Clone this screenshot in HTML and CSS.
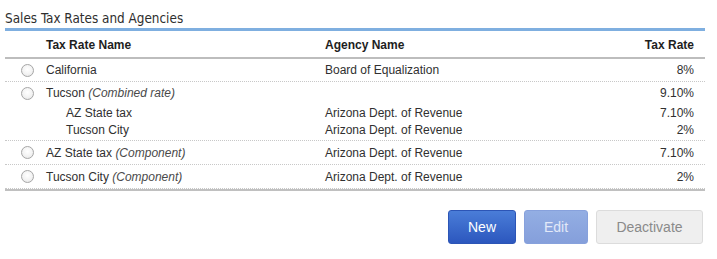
FILE: index.html
```html
<!DOCTYPE html>
<html>
<head>
<meta charset="utf-8">
<link rel="stylesheet" href="styles.css">
</head>
<body>
<div class="panel">
  <div class="title">Sales Tax Rates and Agencies</div>
  <div class="table">
    <div class="row head">
      <div class="c-sel"></div>
      <div class="c-name">Tax Rate Name</div>
      <div class="c-agency">Agency Name</div>
      <div class="c-rate">Tax Rate</div>
    </div>
    <div class="row item">
      <div class="c-sel"><span class="radio"></span></div>
      <div class="c-name">California</div>
      <div class="c-agency">Board of Equalization</div>
      <div class="c-rate">8%</div>
    </div>
    <div class="group">
      <div class="row main">
        <div class="c-sel"><span class="radio"></span></div>
        <div class="c-name">Tucson <em>(Combined rate)</em></div>
        <div class="c-agency"></div>
        <div class="c-rate">9.10%</div>
      </div>
      <div class="row sub">
        <div class="c-sel"></div>
        <div class="c-name">AZ State tax</div>
        <div class="c-agency">Arizona Dept. of Revenue</div>
        <div class="c-rate">7.10%</div>
      </div>
      <div class="row sub">
        <div class="c-sel"></div>
        <div class="c-name">Tucson City</div>
        <div class="c-agency">Arizona Dept. of Revenue</div>
        <div class="c-rate">2%</div>
      </div>
    </div>
    <div class="row item tall">
      <div class="c-sel"><span class="radio"></span></div>
      <div class="c-name">AZ State tax <em>(Component)</em></div>
      <div class="c-agency">Arizona Dept. of Revenue</div>
      <div class="c-rate">7.10%</div>
    </div>
    <div class="row item tall last">
      <div class="c-sel"><span class="radio"></span></div>
      <div class="c-name">Tucson City <em>(Component)</em></div>
      <div class="c-agency">Arizona Dept. of Revenue</div>
      <div class="c-rate">2%</div>
    </div>
  </div>
  <div class="actions">
    <button class="btn primary">New</button>
    <button class="btn disabled-primary">Edit</button>
    <button class="btn disabled">Deactivate</button>
  </div>
</div>
</body>
</html>
```

FILE: styles.css
```css
html, body {
  margin: 0;
  padding: 0;
  background: #ffffff;
}
.panel {
  width: 700px;
  margin-left: 5px;
  font-family: "Liberation Sans", Arial, sans-serif;
  font-size: 12px;
  color: #303030;
}
.title {
  padding-top: 10px;
  height: 18px;
  line-height: 18px;
  font-family: "DejaVu Sans Condensed", "DejaVu Sans", sans-serif;
  font-stretch: condensed;
  font-size: 13.4px;
  color: #2e2e2e;
  border-bottom: 3px solid #7fafe0;
  margin-bottom: 1px;
}
.row {
  display: grid;
  grid-template-columns: 41px 279px 1fr 100px;
  align-items: center;
}
.head {
  height: 25px;
  font-weight: bold;
  color: #1e1e1e;
  border-bottom: 2px solid #bdbdbd;
}
.item {
  height: 22px;
  border-bottom: 1px dotted #c8c8c8;
}
.item.tall {
  height: 23px;
}
.item.last {
  border-bottom: 1px dotted #c8c8c8;
  box-shadow: 0 2px 0 #c0c0c0;
  margin-bottom: 2px;
}
.group {
  padding-bottom: 2px;
  border-bottom: 1px dotted #c8c8c8;
}
.main {
  height: 22px;
}
.sub {
  height: 17px;
}
.sub .c-name {
  padding-left: 20px;
}
.c-sel {
  display: flex;
  justify-content: center;
  align-items: center;
  padding-left: 3px;
}
.c-rate {
  text-align: right;
  padding-right: 11px;
}
em {
  color: #4a4a4a;
}
.radio {
  display: block;
  width: 11px;
  height: 11px;
  border: 1px solid #a6a6a6;
  border-radius: 50%;
  background: radial-gradient(circle at 50% 40%, #ffffff 0%, #f4f4f4 50%, #e2e2e2 100%);
}
.actions {
  display: flex;
  justify-content: flex-end;
  gap: 8px;
  margin-top: 21px;
  padding-right: 2px;
}
.btn {
  height: 34px;
  border-radius: 3px;
  font-family: "Liberation Sans", Arial, sans-serif;
  font-size: 14px;
  padding: 0;
  box-sizing: border-box;
}
.primary {
  width: 68px;
  color: #ffffff;
  background: linear-gradient(#4a7dd8, #2c57be);
  border: 1px solid #2c55b6;
}
.disabled-primary {
  width: 64px;
  color: #e2e9f8;
  background: linear-gradient(#93aee3, #859fdb);
  border: 1px solid #87a1dc;
}
.disabled {
  width: 107px;
  color: #8a8a8a;
  background: #efefef;
  border: 1px solid #dcdcdc;
}
```
